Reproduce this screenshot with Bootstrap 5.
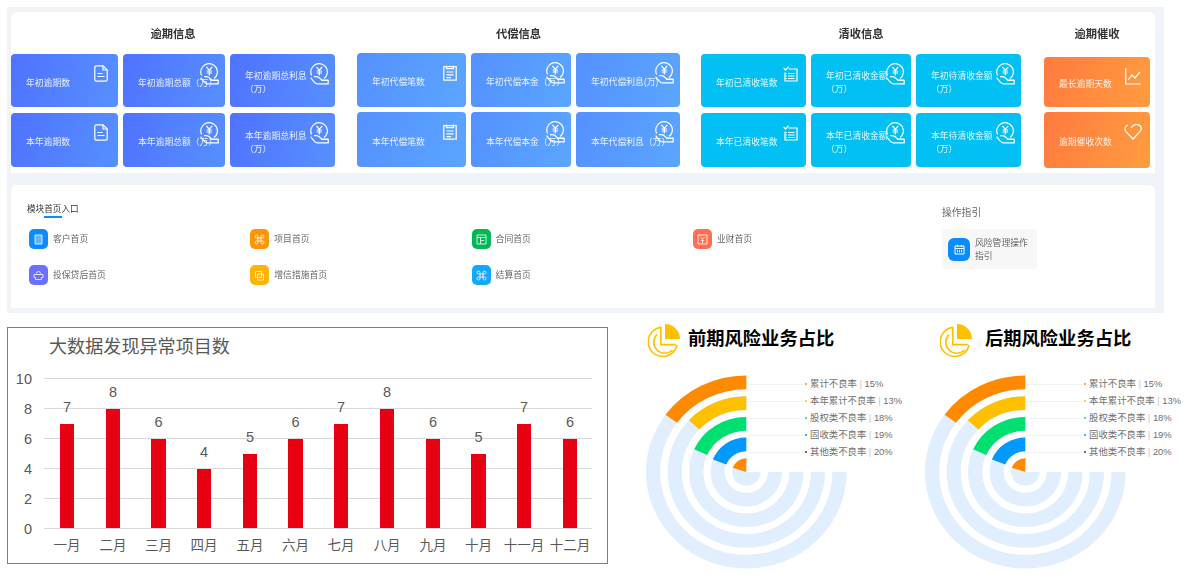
<!DOCTYPE html>
<html lang="zh-CN">
  <head>
    <meta charset="UTF-8" />
    <meta name="viewport" content="width=device-width, initial-scale=1" />
    <title>风险管理首页</title>
    <link href="https://cdn.jsdelivr.net/npm/bootstrap@5.3.3/dist/css/bootstrap.min.css" rel="stylesheet" />
    <style>
      body { background: #fff; font-family: "Noto Sans CJK SC", "Liberation Sans", sans-serif; padding: 7px 0 0 7px; }
      svg text { font-family: "Liberation Sans", "Noto Sans CJK SC", sans-serif; }

      /* top dashboard */
      .dash-wrap { width: 1157px; height: 306px; background: #f0f3f8; padding: 5px 9px 5px 4px; filter: blur(.3px); }
      .stat-panel { height: 161px; background: #fff; border-radius: 6px 6px 0 0; gap: 22px; padding-right: 5px; }
      .group-title { height: 42px; line-height: 42px; font-size: 11.3px; color: #333; }
      .group-clear { margin-left: -1px; }
      .group-urge { margin-left: 1px; }
      .tile-grid { display: grid; }
      .grid-overdue { grid-template-columns: 107px 102px 105px; grid-template-rows: 53px 54px; gap: 6px 5px; }
      .grid-comp { grid-template-columns: 109px 100px 104px; grid-template-rows: 54px 55px; gap: 5px; margin-top: -1px; }
      .grid-clear { grid-template-columns: 105px 100px 105px; grid-template-rows: 53px 54px; gap: 6px 5px; }
      .grid-urge { grid-template-columns: 106px; grid-template-rows: 50px 56px; gap: 5px; margin-top: 3px; }
      .stat-tile { border-radius: 4px; color: rgba(255,255,255,.88); font-size: 8.8px; line-height: 13px; padding: 3px 4px 0 15px; white-space: nowrap; }
      .tile-blue { background: linear-gradient(110deg, #4f72ff, #5690ff); }
      .tile-sky { background: linear-gradient(110deg, #5590ff, #5aa6ff); }
      .tile-cyan { background: #02c0f3; }
      .tile-orange { background: linear-gradient(110deg, #ff7a40, #ff9d3f); }
      .tile-ico { position: absolute; fill: none; stroke: #fff; stroke-width: 1.2; }
      .ico-doc { width: 14px; height: 17px; top: 11px; right: 10px; }
      .ico-clip { width: 14px; height: 16px; top: 12px; right: 9px; }
      .ico-check { width: 15px; height: 16px; top: 12px; right: 8px; }
      .ico-coin { width: 19px; height: 22px; top: 9px; right: 6px; }
      .ico-line { width: 16px; height: 17px; top: 11px; right: 9px; }
      .ico-heart { width: 18px; height: 16px; top: 12px; right: 8px; }

      /* module entries */
      .entry-panel { height: 123px; margin-top: 12px; background: #fff; border-radius: 6px 6px 0 0; padding: 17px 0 0 16px; }
      .entry-left { width: 915px; }
      .entry-label { font-size: 8.6px; line-height: 12px; color: #333; }
      .entry-bar { width: 18px; height: 2px; background: #0a8cff; margin: 2px 0 11px 17px; }
      .entry-grid { display: grid; grid-template-columns: repeat(4, 221.3px); grid-auto-rows: 20px; row-gap: 16px; margin-left: 2px; }
      .entry-item { font-size: 8.8px; color: #666; }
      .entry-ico { width: 19px; height: 20px; border-radius: 5px; margin-right: 5px; }
      .entry-ico svg { width: 11px; height: 11px; fill: none; stroke: rgba(255,255,255,.8); stroke-width: 1; }
      .entry-ico .ico-solid { fill: rgba(255,255,255,.35); }
      .bg-c1 { background: #0a8cff; } .bg-c2 { background: #6a70ff; } .bg-c3 { background: #ff9500; } .bg-c4 { background: #ffb400; }
      .bg-c5 { background: #00b853; } .bg-c6 { background: #14a7ff; } .bg-c7 { background: #ff6f55; }
      .guide-label { font-size: 9.8px; line-height: 14px; color: #666; margin-top: 3px; }
      .guide-card { width: 95px; height: 40px; margin-top: 10px; background: #f7f7f8; border-radius: 4px; padding-left: 6px; font-size: 8.8px; line-height: 13px; color: #666; }
      .guide-ico { width: 22px; height: 23px; border-radius: 6px; margin-right: 5px; background: #0a8cff; flex: none; }
      .guide-ico svg { width: 11px; height: 11px; fill: none; stroke: #fff; stroke-width: 1; }

      /* bottom charts */
      .chart-row { margin-top: 11px; }
      .bar-box { width: 601px; height: 237px; margin-top: 3px; margin-right: 22px; border: 1px solid #808070; background: #fff; }
      .bar-box svg, .risk-svg { display: block; }
      .risk-box { width: 279px; }
      .risk-title { height: 33px; padding-bottom: 6px; font-size: 18.3px; font-weight: 700; color: #000; }
      .risk-title svg { width: 32px; height: 33px; margin-right: 8px; margin-bottom: -6px; }
      .risk-a .risk-title { padding-left: 18px; }
      .risk-b .risk-title { padding-left: 31px; }
      .risk-b .risk-title svg { margin-right: 13px; }
      .axis-num { font-size: 14.5px; fill: #595959; }
      .month-txt { font-size: 13.5px; fill: #595959; text-anchor: middle; }
      .rate-txt { font-size: 9.4px; fill: #6f6f6f; }
      .rate-txt tspan { fill: #c4c4c4; }
      .ring-bg { fill: none; stroke: #e1eefd; stroke-width: 13.7; }
      .ring-val { fill: none; stroke-width: 13.7; }
      .lead-line { stroke: #f2f2f2; stroke-width: 1; }
    </style>
  </head>
  <body>

    <!-- icon set -->
    <svg class="d-none" xmlns="http://www.w3.org/2000/svg">
      <symbol id="i-doc" viewBox="0 0 14 17">
        <path d="M2.5.8H9l4.2 4.2v9.5a1.7 1.7 0 0 1-1.7 1.7h-9A1.7 1.7 0 0 1 .8 14.5v-12A1.7 1.7 0 0 1 2.5.8z" /><path d="M9 1v4h4M3.5 8.5h5M3.5 11.5h7" />
      </symbol>
      <symbol id="i-clip" viewBox="0 0 14 16">
        <path d="M.8 1.6h12.4v13.6H.8z" /><path d="M3.5 .6v3h7v-3M3.5 7h7M3.5 9.8h7M3.5 12.6h4.5" />
      </symbol>
      <symbol id="i-check" viewBox="0 0 15 16">
        <path d="M5.5 3H14v12H2V6.5" /><path d="M.6 1.8l2 2.2L5.6.6M5 7.5h6.5M5 10h6.5M5 12.5h6.5M2.7 7.5h1M2.7 10h1M2.7 12.5h1" />
      </symbol>
      <symbol id="i-coin" viewBox="0 0 19 22">
        <path d="M1.6 12.5A8.3 8.3 0 1 1 14 15.6" /><path d="M6.3 3.8l3 3.4 3-3.4M9.3 7.2v5.2M6.6 8h5.4M6.6 10h5.4" />
        <path d="M.6 14.6l3.6 4.6c.8 1 1.6 1.6 3 1.6h11v-3.4h-6l-3-2.6c-1-.8-2-1.2-3.2-1.2H4" /><path d="M11 17.2H18" />
      </symbol>
      <symbol id="i-line" viewBox="0 0 16 17">
        <path d="M.8 0v16h15" /><path d="M3 12l4-5 3 3 5-6" />
      </symbol>
      <symbol id="i-heart" viewBox="0 0 18 16">
        <path d="M7 3.500L9.800 1.200c2.600-1.500 7.500-.4 7.500 3.400 0 1.200-.6 2.200-1.400 3L9 15 2 7.600C.2 5.500.8 2 4 1.200" />
      </symbol>
      <symbol id="i-pie" viewBox="0 0 32 33">
        <path d="M17 0a15 15 0 0 1 15 15H17z" fill="#ffc000" />
        <g fill="none" stroke="#ffc000" stroke-width="1.6">
          <path d="M13 3.4A14.6 14.6 0 1 0 29 21" /><path d="M9 10.5A10.6 10.6 0 0 0 24.5 26" /><path d="M12.8 3v17.6h15" />
        </g>
      </symbol>
      <symbol id="i-rings" viewBox="0 0 279 215">
        <g transform="translate(116.3 115) scale(1.04 1)">
          <g class="ring-bg">
            <circle r="89.65" pathLength="360" stroke-dasharray="270 360" />
            <circle r="68.85" pathLength="360" stroke-dasharray="270 360" />
            <circle r="48.2" pathLength="360" stroke-dasharray="270 360" />
            <circle r="27.55" pathLength="360" stroke-dasharray="270 360" />
            <circle r="6.85" pathLength="360" stroke-dasharray="270 360" />
          </g>
          <circle class="ring-val" stroke="#ff8a00" r="89.65" pathLength="360" stroke-dasharray="53.6 360" transform="rotate(-143.6)" />
          <circle class="ring-val" stroke="#ffc000" r="68.85" pathLength="360" stroke-dasharray="46.8 360" transform="rotate(-136.8)" />
          <circle class="ring-val" stroke="#00e070" r="48.2" pathLength="360" stroke-dasharray="65.6 360" transform="rotate(-155.6)" />
          <circle class="ring-val" stroke="#0099ff" r="27.55" pathLength="360" stroke-dasharray="68.7 360" transform="rotate(-158.7)" />
          <circle class="ring-val" stroke="#ff8a00" r="6.85" pathLength="360" stroke-dasharray="72 360" transform="rotate(-162)" />
        </g>
      </symbol>
    </svg>

    <div class="dash-wrap">
      <!-- stat tiles -->
      <div class="stat-panel d-flex">
        <div>
          <div class="group-title text-center fw-bold">逾期信息</div>
          <div class="tile-grid grid-overdue">
            <div class="stat-tile tile-blue position-relative d-flex align-items-center">年初逾期数<svg class="tile-ico ico-doc"><use href="#i-doc" /></svg></div>
            <div class="stat-tile tile-blue position-relative d-flex align-items-center">年初逾期总额（万）<svg class="tile-ico ico-coin"><use href="#i-coin" /></svg></div>
            <div class="stat-tile tile-blue position-relative d-flex align-items-center"><span>年初逾期总利息<br />（万）</span><svg class="tile-ico ico-coin"><use href="#i-coin" /></svg></div>
            <div class="stat-tile tile-blue position-relative d-flex align-items-center">本年逾期数<svg class="tile-ico ico-doc"><use href="#i-doc" /></svg></div>
            <div class="stat-tile tile-blue position-relative d-flex align-items-center">本年逾期总额（万）<svg class="tile-ico ico-coin"><use href="#i-coin" /></svg></div>
            <div class="stat-tile tile-blue position-relative d-flex align-items-center"><span>本年逾期总利息<br />（万）</span><svg class="tile-ico ico-coin"><use href="#i-coin" /></svg></div>
          </div>
        </div>
        <div>
          <div class="group-title text-center fw-bold">代偿信息</div>
          <div class="tile-grid grid-comp">
            <div class="stat-tile tile-sky position-relative d-flex align-items-center">年初代偿笔数<svg class="tile-ico ico-clip"><use href="#i-clip" /></svg></div>
            <div class="stat-tile tile-sky position-relative d-flex align-items-center">年初代偿本金（万）<svg class="tile-ico ico-coin"><use href="#i-coin" /></svg></div>
            <div class="stat-tile tile-sky position-relative d-flex align-items-center">年初代偿利息(万)<svg class="tile-ico ico-coin"><use href="#i-coin" /></svg></div>
            <div class="stat-tile tile-sky position-relative d-flex align-items-center">本年代偿笔数<svg class="tile-ico ico-clip"><use href="#i-clip" /></svg></div>
            <div class="stat-tile tile-sky position-relative d-flex align-items-center">本年代偿本金（万）<svg class="tile-ico ico-coin"><use href="#i-coin" /></svg></div>
            <div class="stat-tile tile-sky position-relative d-flex align-items-center">本年代偿利息（万）<svg class="tile-ico ico-coin"><use href="#i-coin" /></svg></div>
          </div>
        </div>
        <div class="group-clear">
          <div class="group-title text-center fw-bold">清收信息</div>
          <div class="tile-grid grid-clear">
            <div class="stat-tile tile-cyan position-relative d-flex align-items-center">年初已清收笔数<svg class="tile-ico ico-check"><use href="#i-check" /></svg></div>
            <div class="stat-tile tile-cyan position-relative d-flex align-items-center"><span>年初已清收金额<br />（万）</span><svg class="tile-ico ico-coin"><use href="#i-coin" /></svg></div>
            <div class="stat-tile tile-cyan position-relative d-flex align-items-center"><span>年初待清收金额<br />（万）</span><svg class="tile-ico ico-coin"><use href="#i-coin" /></svg></div>
            <div class="stat-tile tile-cyan position-relative d-flex align-items-center">本年已清收笔数<svg class="tile-ico ico-check"><use href="#i-check" /></svg></div>
            <div class="stat-tile tile-cyan position-relative d-flex align-items-center"><span>本年已清收金额<br />（万）</span><svg class="tile-ico ico-coin"><use href="#i-coin" /></svg></div>
            <div class="stat-tile tile-cyan position-relative d-flex align-items-center"><span>本年待清收金额<br />（万）</span><svg class="tile-ico ico-coin"><use href="#i-coin" /></svg></div>
          </div>
        </div>
        <div class="group-urge">
          <div class="group-title text-center fw-bold">逾期催收</div>
          <div class="tile-grid grid-urge">
            <div class="stat-tile tile-orange position-relative d-flex align-items-center">最长逾期天数<svg class="tile-ico ico-line"><use href="#i-line" /></svg></div>
            <div class="stat-tile tile-orange position-relative d-flex align-items-center">逾期催收次数<svg class="tile-ico ico-heart"><use href="#i-heart" /></svg></div>
          </div>
        </div>
      </div>

      <!-- module entries -->
      <div class="entry-panel d-flex">
        <div class="entry-left">
          <div class="entry-label">模块首页入口</div>
          <div class="entry-bar"></div>
          <div class="entry-grid">
            <div class="entry-item d-flex align-items-center"><span class="entry-ico bg-c1 d-flex align-items-center justify-content-center"><svg viewBox="0 0 11 11"><path d="M2 1h7v9H2z" class="ico-solid" /></svg></span>客户首页</div>
            <div class="entry-item d-flex align-items-center"><span class="entry-ico bg-c3 d-flex align-items-center justify-content-center"><svg viewBox="0 0 11 11"><path d="M4 4h3v3H4zM4 4H2.5A1.5 1.5 0 1 1 4 2.5zM7 4V2.5A1.5 1.5 0 1 1 8.500 4zM7 7h1.5A1.5 1.5 0 1 1 7 8.500zM4 7v1.5A1.5 1.5 0 1 1 2.5 7z" /></svg></span>项目首页</div>
            <div class="entry-item d-flex align-items-center"><span class="entry-ico bg-c5 d-flex align-items-center justify-content-center"><svg viewBox="0 0 11 11"><path d="M1 1h9v9H1zM1 3.500h9M4.500 3.500V10M4.500 6.500H8" /></svg></span>合同首页</div>
            <div class="entry-item d-flex align-items-center"><span class="entry-ico bg-c7 d-flex align-items-center justify-content-center"><svg viewBox="0 0 11 11"><path d="M1 1h9v9H1zM3.500 3l2 2.500 2-2.500M5.500 5.500V9M3.800 6.500h3.400" /></svg></span>业财首页</div>
            <div class="entry-item d-flex align-items-center"><span class="entry-ico bg-c2 d-flex align-items-center justify-content-center"><svg viewBox="0 0 11 11"><path d="M3.500 3.500a2 2 0 1 1 4 0M1 4.500h9v3H8.500v2h-6v-2H1z" /></svg></span>投保贷后首页</div>
            <div class="entry-item d-flex align-items-center"><span class="entry-ico bg-c4 d-flex align-items-center justify-content-center"><svg viewBox="0 0 11 11"><path d="M1.500 1.500h6v6h-6z" /><path d="M3.500 4h6v6h-6z" /></svg></span>增信措施首页</div>
            <div class="entry-item d-flex align-items-center"><span class="entry-ico bg-c6 d-flex align-items-center justify-content-center"><svg viewBox="0 0 11 11"><path d="M4 4h3v3H4zM4 4H2.5A1.5 1.5 0 1 1 4 2.5zM7 4V2.5A1.5 1.5 0 1 1 8.500 4zM7 7h1.5A1.5 1.5 0 1 1 7 8.500zM4 7v1.5A1.5 1.5 0 1 1 2.5 7z" /></svg></span>结算首页</div>
          </div>
        </div>
        <div>
          <div class="guide-label">操作指引</div>
          <div class="guide-card d-flex align-items-center">
            <span class="guide-ico d-flex align-items-center justify-content-center"><svg viewBox="0 0 11 11"><path d="M1 2h9v8H1zM3.500 .8v2M7.500 .8v2M1 4.500h9M3.500 6v2.500M5.500 6v2.500M7.500 6v2.500" /></svg></span>
            <span>风险管理操作<br />指引</span>
          </div>
        </div>
      </div>
    </div>

    <!-- bottom charts -->
    <div class="chart-row d-flex">
      <div class="bar-box">
        <svg width="599" height="235" viewBox="0 0 599 235">
          <text x="41" y="24.5" font-size="18.1" fill="#595959">大数据发现异常项目数</text>
          <g stroke="#d9d9d9" stroke-width="1">
            <path d="M36 50.5h548M36 80.5h548M36 110.5h548M36 140.5h548M36 170.5h548M36 200.5h548" />
          </g>
          <g class="axis-num" text-anchor="end">
            <text x="24" y="55.5">10</text><text x="24" y="85.5">8</text><text x="24" y="115.5">6</text>
            <text x="24" y="145.5">4</text><text x="24" y="175.5">2</text><text x="24" y="205.5">0</text>
          </g>
          <g fill="#e60012">
            <rect x="52" y="96" width="14" height="104" /><rect x="98" y="81" width="14" height="119" />
            <rect x="143" y="111" width="15" height="89" /><rect x="189" y="141" width="14" height="59" />
            <rect x="235" y="126" width="14" height="74" /><rect x="280" y="111" width="15" height="89" />
            <rect x="326" y="96" width="14" height="104" /><rect x="372" y="81" width="14" height="119" />
            <rect x="418" y="111" width="14" height="89" /><rect x="463" y="126" width="15" height="74" />
            <rect x="509" y="96" width="14" height="104" /><rect x="555" y="111" width="14" height="89" />
          </g>
          <g class="axis-num" text-anchor="middle">
            <text x="59" y="84">7</text><text x="105" y="69">8</text><text x="150.5" y="99">6</text><text x="196" y="129">4</text>
            <text x="242" y="114">5</text><text x="287.5" y="99">6</text><text x="333" y="84">7</text><text x="379" y="69">8</text>
            <text x="425" y="99">6</text><text x="470.5" y="114">5</text><text x="516" y="84">7</text><text x="562" y="99">6</text>
          </g>
          <g class="month-txt">
            <text x="59" y="222">一月</text><text x="105" y="222">二月</text><text x="150.5" y="222">三月</text><text x="196" y="222">四月</text>
            <text x="242" y="222">五月</text><text x="287.5" y="222">六月</text><text x="333" y="222">七月</text><text x="379" y="222">八月</text>
            <text x="425" y="222">九月</text><text x="470.5" y="222">十月</text><text x="516" y="222">十一月</text><text x="562" y="222">十二月</text>
          </g>
        </svg>
      </div>

      <div class="risk-box risk-a">
        <div class="risk-title d-flex align-items-center"><svg><use href="#i-pie" /></svg>前期风险业务占比</div>
        <svg class="risk-svg" width="279" height="215" viewBox="0 0 279 215">
          <use href="#i-rings" />
          <path class="lead-line" d="M118 27.5h55M118 44.5h55M118 61.5h55M118 78.5h55M118 95.5h55" />
          <circle cx="176" cy="27" r="1" fill="#ff8a00" /><circle cx="176" cy="44" r="1" fill="#ffc000" /><circle cx="176" cy="61" r="1" fill="#00e070" /><circle cx="176" cy="78" r="1" fill="#0099ff" /><circle cx="176" cy="95" r="1" fill="#444" />
          <g class="rate-txt">
            <text x="180" y="30">累计不良率 <tspan>|</tspan> 15%</text>
            <text x="180" y="47">本年累计不良率 <tspan>|</tspan> 13%</text>
            <text x="180" y="64">股权类不良率 <tspan>|</tspan> 18%</text>
            <text x="180" y="81">固收类不良率 <tspan>|</tspan> 19%</text>
            <text x="180" y="98">其他类不良率 <tspan>|</tspan> 20%</text>
          </g>
        </svg>
      </div>
      <div class="risk-box risk-b">
        <div class="risk-title d-flex align-items-center"><svg><use href="#i-pie" /></svg>后期风险业务占比</div>
        <svg class="risk-svg" width="279" height="215" viewBox="0 0 279 215">
          <use href="#i-rings" />
          <path class="lead-line" d="M118 27.5h55M118 44.5h55M118 61.5h55M118 78.5h55M118 95.5h55" />
          <circle cx="176" cy="27" r="1" fill="#ff8a00" /><circle cx="176" cy="44" r="1" fill="#ffc000" /><circle cx="176" cy="61" r="1" fill="#00e070" /><circle cx="176" cy="78" r="1" fill="#0099ff" /><circle cx="176" cy="95" r="1" fill="#444" />
          <g class="rate-txt">
            <text x="180" y="30">累计不良率 <tspan>|</tspan> 15%</text>
            <text x="180" y="47">本年累计不良率 <tspan>|</tspan> 13%</text>
            <text x="180" y="64">股权类不良率 <tspan>|</tspan> 18%</text>
            <text x="180" y="81">固收类不良率 <tspan>|</tspan> 19%</text>
            <text x="180" y="98">其他类不良率 <tspan>|</tspan> 20%</text>
          </g>
        </svg>
      </div>
    </div>

    <script src="https://cdn.jsdelivr.net/npm/bootstrap@5.3.3/dist/js/bootstrap.bundle.min.js"></script>
  </body>
</html>
